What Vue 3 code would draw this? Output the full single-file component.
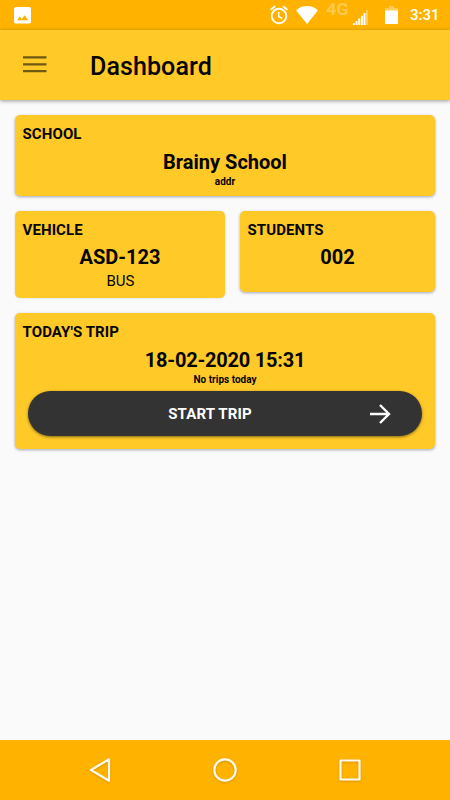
<script setup>
const school = { name: 'Brainy School', address: 'addr' }
const vehicle = { plate: 'ASD-123', type: 'BUS' }
const students = '002'
const trip = { time: '18-02-2020 15:31', note: 'No trips today' }
</script>

<template>
  <div class="screen">
    <div class="status">
      <svg class="photo" width="17" height="17" viewBox="0 0 17 17">
        <path fill="#fff" fill-rule="evenodd" d="M1.8 0h13.4A1.8 1.8 0 0 1 17 1.8v12.9a1.8 1.8 0 0 1-1.8 1.8H1.8A1.8 1.8 0 0 1 0 14.700V1.800A1.800 1.800 0 0 1 1.800 0ZM3 13.200h11.300L10.600 8.300 7.700 12 5.700 9.600Z" />
      </svg>
      <svg class="alarm" width="18" height="20" viewBox="0 0 18 20" fill="none" stroke="#fff">
        <circle cx="9" cy="11" r="7.300" stroke-width="1.900" />
        <path stroke-width="1.900" d="M.7 4.800 5 1.200M17.300 4.800 13 1.200" />
        <path stroke-width="1.500" d="M8.700 7v4.500l3.400 2" />
      </svg>
      <svg class="wifi" width="22" height="18" viewBox="0 0 22 18">
        <path fill="#fff" d="M11 18 0 4.200C3 1.500 7 0 11 0s8 1.500 11 4.200Z" />
      </svg>
      <span class="network"><span class="network-text">4G</span></span>
      <svg class="signal" width="15" height="15" viewBox="0 0 15 15" fill="#fff">
        <path d="M0 13h1.700v2H0zM2.600 11h1.900v4H2.600zM5.200 8.500h2V15h-2zM7.900 5.800h2V15h-2zM10.500 3h2v12h-2z" />
        <path opacity=".4" d="M13 0h1.700v15H13z" />
      </svg>
      <svg class="battery" width="13" height="18" viewBox="0 0 13 18" fill="#fff">
        <path opacity=".35" d="M4 0h5v2h3.200q.8 0 .8.800V5H0V2.800Q0 2 .8 2H4z" />
        <path d="M0 4.500h13v12.700q0 .8-.8.800H.8q-.8 0-.8-.8z" />
      </svg>
      <span class="clock">3:31</span>
    </div>

    <header class="appbar">
      <svg class="menu" width="24" height="17" viewBox="0 0 24 17">
        <path fill="#6f5812" d="M0 .3h23.500v2.200H0zM0 7.200h23.500v2.200H0zM0 14.100h23.500v2.200H0z" />
      </svg>
      <h1 class="title">Dashboard</h1>
    </header>

    <main class="content">
      <section class="card school">
        <div class="label">SCHOOL</div>
        <div class="value">{{ school.name }}</div>
        <div class="note">{{ school.address }}</div>
      </section>

      <div class="row">
        <section class="card vehicle">
          <div class="label">VEHICLE</div>
          <div class="value">{{ vehicle.plate }}</div>
          <div class="type">{{ vehicle.type }}</div>
        </section>
        <section class="card students">
          <div class="label">STUDENTS</div>
          <div class="value">{{ students }}</div>
        </section>
      </div>

      <section class="card trip">
        <div class="label">TODAY'S TRIP</div>
        <div class="value date">{{ trip.time }}</div>
        <div class="note">{{ trip.note }}</div>
        <button class="start">
          <span class="start-text">START TRIP</span>
          <svg width="21" height="20" viewBox="0 0 21 20" fill="none" stroke="#fff" stroke-width="2.400">
            <path d="M0 10h18.500M10 1l9 9-9 9" />
          </svg>
        </button>
      </section>
    </main>

    <nav class="navbar">
      <svg width="26" height="26" viewBox="0 0 26 26">
        <path d="M22 2.300v21.400L4 13z" />
      </svg>
      <svg width="26" height="26" viewBox="0 0 26 26">
        <circle cx="13" cy="13" r="10.700" />
      </svg>
      <svg width="26" height="26" viewBox="0 0 26 26">
        <rect x="3.500" y="3.500" width="19" height="19" />
      </svg>
    </nav>
  </div>
</template>

<style>
body {
  margin: 0;
}
</style>

<style scoped>
.screen {
  box-sizing: border-box;
  width: 450px;
  height: 800px;
  display: flex;
  flex-direction: column;
  overflow: hidden;
  background: #fafafa;
  color: #050400;
  font-family: Roboto, sans-serif;
}
svg {
  display: block;
  flex: none;
}
.status {
  height: 30px;
  flex: none;
  display: flex;
  align-items: flex-start;
  background: #ffb300;
  color: #fff;
}
.photo {
  margin: 7px 0 0 14px;
}
.alarm {
  margin: 5px 0 0 239px;
}
.wifi {
  margin: 6px 0 0 8px;
}
.network {
  width: 23px;
  margin: 1px 0 0 8px;
}
.network-text {
  display: block;
  width: 19px;
  font-size: 16px;
  line-height: 18px;
  font-weight: 700;
  opacity: 0.3;
  transform: scaleX(1.12);
  transform-origin: left;
}
.signal {
  margin: 10px 0 0 4px;
}
.battery {
  margin: 6px 0 0 17px;
}
.clock {
  margin: 6px 0 0 12px;
  font-size: 15px;
  line-height: 19px;
  font-weight: 500;
}
.appbar {
  position: relative;
  height: 70px;
  flex: none;
  display: flex;
  align-items: center;
  background: #ffca28;
  box-shadow: 0 1px 4px rgba(0, 0, 0, 0.4);
}
.menu {
  margin: 0 0 2px 23px;
}
.title {
  margin: 3px 0 0 43px;
  font-size: 25px;
  line-height: 30px;
  font-weight: 500;
  letter-spacing: 0.1px;
}
.content {
  flex: 1;
  padding: 15px;
  display: flex;
  flex-direction: column;
  gap: 15px;
}
.card {
  box-sizing: border-box;
  padding: 9px 7.5px 0;
  border-radius: 5px;
  background: #ffca28;
  box-shadow: 0 1px 3px rgba(20, 30, 70, 0.38);
  text-align: center;
}
.school {
  height: 81px;
}
.row {
  display: flex;
  align-items: flex-start;
  gap: 15px;
}
.vehicle {
  width: 210px;
  height: 87px;
  box-shadow: 0 0 2px rgba(20, 30, 70, 0.2);
}
.students {
  width: 195px;
  height: 81px;
}
.trip {
  height: 136px;
}
.label {
  font-size: 15px;
  line-height: 20px;
  font-weight: 700;
  text-align: left;
  letter-spacing: 0.1px;
}
.value {
  margin-top: 6px;
  font-size: 20px;
  line-height: 25px;
  font-weight: 700;
}
.row .value {
  margin-top: 5px;
}
.date {
  letter-spacing: -0.23px;
}
.note {
  font-size: 10px;
  line-height: 13px;
  font-weight: 700;
}
.type {
  margin-top: 2px;
  padding-left: 1px;
  font-size: 15px;
  line-height: 18px;
}
.start {
  box-sizing: border-box;
  width: 394px;
  height: 45px;
  margin: 5px 0 0 5px;
  padding: 0 31px 0 30px;
  display: flex;
  align-items: center;
  border: 0;
  border-radius: 23px;
  background: #333;
  box-shadow: 0 1px 3px rgba(0, 0, 0, 0.5);
  color: #fff;
  font-family: inherit;
}
.start-text {
  flex: 1;
  padding-right: 7px;
  font-size: 15px;
  font-weight: 700;
  line-height: 20px;
  letter-spacing: 0.15px;
}
.navbar {
  height: 60px;
  flex: none;
  display: flex;
  align-items: center;
  justify-content: center;
  gap: 99px;
  background: #ffb300;
}
.navbar svg {
  fill: none;
  stroke: #fffaf0;
  stroke-width: 2.2;
  stroke-linejoin: round;
  filter: drop-shadow(0 1px 1px rgba(120, 70, 0, 0.3));
}
</style>
